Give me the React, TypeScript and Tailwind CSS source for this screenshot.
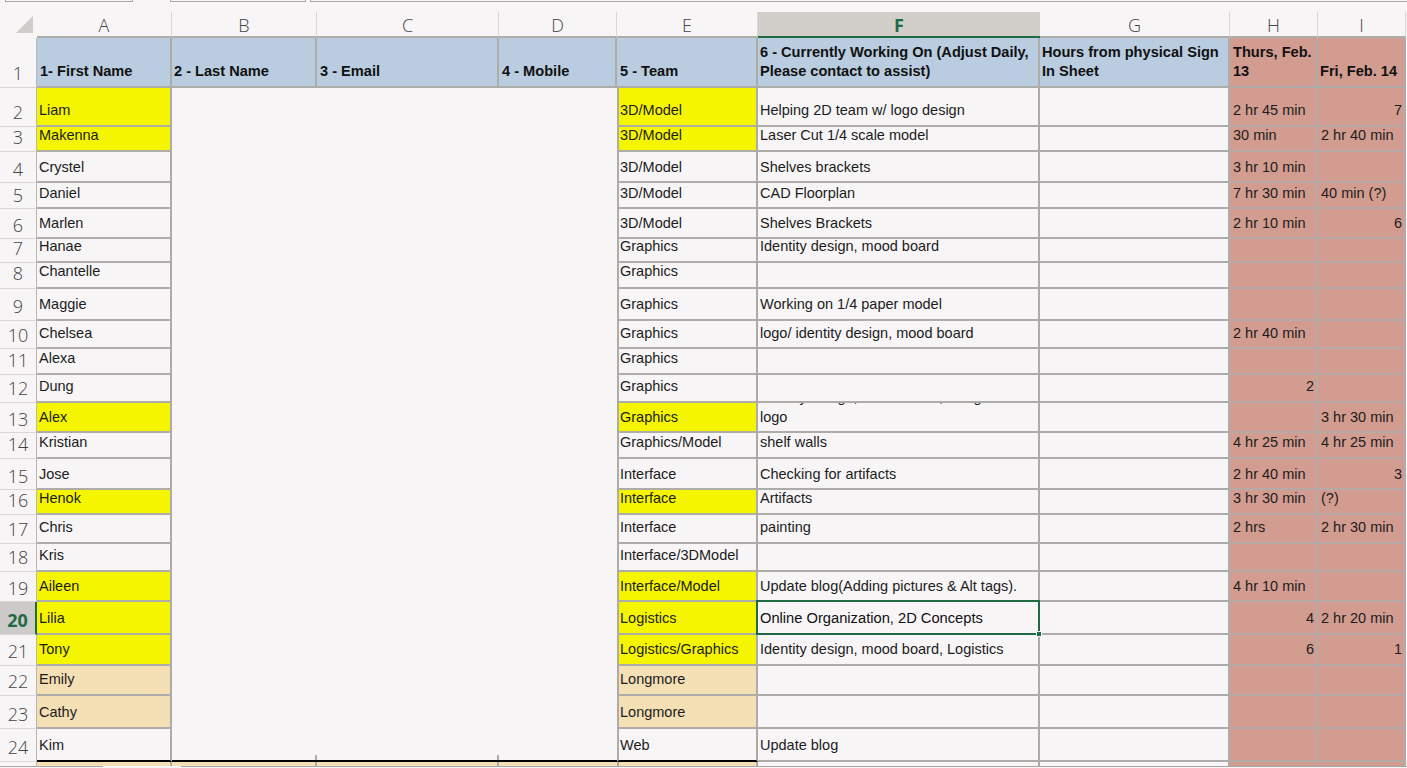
type Fill = "yellow" | "peach" | "";
type Row = {
  n: number;
  h: string;
  m: string;
  first: string;
  team: string;
  work: string;
  hh?: string | number;
  ii?: string | number;
  fill?: Fill;
  cut?: boolean;
};

const rows: Row[] = [
  { n: 2, h: "h-[39px]", m: "mt-[12px]", first: "Liam", team: "3D/Model", work: "Helping 2D team w/ logo design", hh: "2 hr 45 min", ii: 7, fill: "yellow" },
  { n: 3, h: "h-[25px]", m: "mt-[-2px]", first: "Makenna", team: "3D/Model", work: "Laser Cut 1/4 scale model", hh: "30 min", ii: "2 hr 40 min", fill: "yellow" },
  { n: 4, h: "h-[31px]", m: "mt-[5px]", first: "Crystel", team: "3D/Model", work: "Shelves brackets", hh: "3 hr 10 min" },
  { n: 5, h: "h-[26px]", m: "mt-[0px]", first: "Daniel", team: "3D/Model", work: "CAD Floorplan", hh: "7 hr 30 min", ii: "40 min (?)" },
  { n: 6, h: "h-[30px]", m: "mt-[4px]", first: "Marlen", team: "3D/Model", work: "Shelves Brackets", hh: "2 hr 10 min", ii: 6 },
  { n: 7, h: "h-[24px]", m: "mt-[-3px]", first: "Hanae", team: "Graphics", work: "Identity design, mood board" },
  { n: 8, h: "h-[26px]", m: "mt-[-2px]", first: "Chantelle", team: "Graphics", work: "" },
  { n: 9, h: "h-[32px]", m: "mt-[5px]", first: "Maggie", team: "Graphics", work: "Working on 1/4 paper model" },
  { n: 10, h: "h-[28px]", m: "mt-[2px]", first: "Chelsea", team: "Graphics", work: "logo/ identity design, mood board", hh: "2 hr 40 min" },
  { n: 11, h: "h-[26px]", m: "mt-[-1px]", first: "Alexa", team: "Graphics", work: "" },
  { n: 12, h: "h-[28px]", m: "mt-[1px]", first: "Dung", team: "Graphics", work: "", hh: 2 },
  { n: 13, h: "h-[30px]", m: "mt-[4px]", first: "Alex", team: "Graphics", work: "logo", ii: "3 hr 30 min", fill: "yellow", cut: true },
  { n: 14, h: "h-[26px]", m: "mt-[-1px]", first: "Kristian", team: "Graphics/Model", work: "shelf walls", hh: "4 hr 25 min", ii: "4 hr 25 min" },
  { n: 15, h: "h-[31px]", m: "mt-[5px]", first: "Jose", team: "Interface", work: "Checking for artifacts", hh: "2 hr 40 min", ii: 3 },
  { n: 16, h: "h-[25px]", m: "mt-[-2px]", first: "Henok", team: "Interface", work: "Artifacts", hh: "3 hr 30 min", ii: "(?)", fill: "yellow" },
  { n: 17, h: "h-[29px]", m: "mt-[2px]", first: "Chris", team: "Interface", work: "painting", hh: "2 hrs", ii: "2 hr 30 min" },
  { n: 18, h: "h-[28px]", m: "mt-[1px]", first: "Kris", team: "Interface/3DModel", work: "" },
  { n: 19, h: "h-[30px]", m: "mt-[4px]", first: "Aileen", team: "Interface/Model", work: "Update blog(Adding pictures & Alt tags).", hh: "4 hr 10 min", fill: "yellow" },
  { n: 20, h: "h-[33px]", m: "mt-[6px]", first: "Lilia", team: "Logistics", work: "Online Organization, 2D Concepts", hh: 4, ii: "2 hr 20 min", fill: "yellow" },
  { n: 21, h: "h-[31px]", m: "mt-[4px]", first: "Tony", team: "Logistics/Graphics", work: "Identity design, mood board, Logistics", hh: 6, ii: 1, fill: "yellow" },
  { n: 22, h: "h-[30px]", m: "mt-[3px]", first: "Emily", team: "Longmore", work: "", fill: "peach" },
  { n: 23, h: "h-[33px]", m: "mt-[6px]", first: "Cathy", team: "Longmore", work: "", fill: "peach" },
  { n: 24, h: "h-[33px]", m: "mt-[6px]", first: "Kim", team: "Web", work: "Update blog" },
];

const columns = [
  { l: "A", w: "w-[135px]" },
  { l: "B", w: "w-[145px]" },
  { l: "C", w: "w-[182px]" },
  { l: "D", w: "w-[118px]" },
  { l: "E", w: "w-[141px]" },
  { l: "F", w: "w-[282px]" },
  { l: "G", w: "w-[190px]" },
  { l: "H", w: "w-[88px]" },
  { l: "I", w: "w-[88px]" },
];

const fillClass = (fill?: Fill) =>
  fill === "yellow" ? "bg-[#f5f500]" : fill === "peach" ? "bg-[#f5dfb5]" : "";

const HeaderCell = ({ w, bg, text, pl }: { w: string; bg: string; text: React.ReactNode; pl: string }) => (
  <div className={`${w} ${bg} ${pl} flex shrink-0 items-end border-r-2 border-b-2 border-[#aeaca9] pb-[5px] text-[14.6px] leading-[19px] font-bold text-[#111]`}>
    <div>{text}</div>
  </div>
);

const HourCell = ({ value, m }: { value?: string | number; m: string }) => (
  <div className="h-full w-[88px] shrink-0 overflow-hidden border-r-2 border-b-2 border-[#b5aaa6] bg-[#d39c90] px-[2px]">
    <div className={`${m} leading-[20px] ${typeof value === "number" ? "text-right" : "pl-[1px]"}`}>{value}</div>
  </div>
);

const SheetRow = ({ row }: { row: Row }) => {
  const selected = row.n === 20;
  const last = row.n === 24;
  const edge = last ? "border-b-black" : "";
  return (
    <div className={`${row.h} flex text-[14.5px] text-[#1c1c1c]`}>
      <div
        className={`w-[37px] shrink-0 border-b border-[#d8d6d6] text-center font-['Open_Sans',sans-serif] text-[18px] leading-[20px] ${
          selected ? "border-r-2 border-r-[#1f6b45] bg-[#cdcbc9] font-bold text-[#1f6b45]" : "border-r border-r-[#b9b7b5] font-light text-[#444]"
        }`}
      >
        <div className={`${row.m} pt-[2px]`}>{row.n}</div>
      </div>
      <div className={`${fillClass(row.fill)} h-full w-[135px] shrink-0 overflow-hidden border-r-2 border-b-2 border-[#aeaca9] pl-[2px] ${edge}`}>
        <div className={`${row.m} leading-[20px]`}>{row.first}</div>
      </div>
      {last ? (
        <>
          <div className="flex h-full w-[145px] shrink-0 items-end justify-end border-b-2 border-black">
            <div className="h-[5px] w-[2px] bg-[#aeaca9]" />
          </div>
          <div className="flex h-full w-[182px] shrink-0 items-end justify-end border-b-2 border-black">
            <div className="h-[5px] w-[2px] bg-[#aeaca9]" />
          </div>
          <div className="h-full w-[118px] shrink-0 border-b-2 border-black" />
        </>
      ) : (
        <div className="w-[445px] shrink-0" />
      )}
      <div className={`${fillClass(row.fill)} h-full w-[141px] shrink-0 overflow-hidden border-x-2 border-b-2 border-[#aeaca9] pl-px ${edge}`}>
        <div className={`${row.m} leading-[20px] whitespace-nowrap`}>{row.team}</div>
      </div>
      <div className="relative h-full w-[282px] shrink-0 border-r-2 border-b-2 border-[#aeaca9] pl-[2px]">
        <div className={`h-full overflow-hidden ${selected ? "text-[14.7px] text-[#111]" : ""}`}>
          {row.cut && <div className="mt-[-16px] leading-[20px] whitespace-nowrap">Identity design, mood board, design</div>}
          <div className={`${row.cut ? "" : row.m} leading-[20px] whitespace-nowrap`}>{row.work}</div>
        </div>
        {selected && (
          <div className="absolute top-[-2px] right-[-2px] bottom-[-2px] left-[-2px] z-10 border-2 border-[#1f6b45]">
            <div className="absolute right-[-4px] bottom-[-4px] h-[6px] w-[6px] border border-[#f7f5f6] bg-[#1f6b45]" />
          </div>
        )}
      </div>
      <div className="h-full w-[190px] shrink-0 border-r-2 border-b-2 border-[#aeaca9]" />
      <HourCell value={row.hh} m={row.m} />
      <HourCell value={row.ii} m={row.m} />
    </div>
  );
};

export default function App() {
  return (
    <div className="h-[768px] w-[1407px] overflow-hidden bg-[#f7f5f6] font-['Liberation_Sans',sans-serif]">
      {/* ribbon edge */}
      <div className="flex h-[12px] items-start">
        <div className="ml-[5px] h-[2px] w-[128px] border-x border-b border-[#aaa8a6]" />
        <div className="ml-[37px] h-[2px] w-[136px] border-x border-b border-[#aaa8a6]" />
        <div className="ml-[4px] h-[2px] flex-1 border-b border-l border-[#aaa8a6]" />
      </div>

      {/* column letters */}
      <div className="flex h-[26px] font-['Open_Sans',sans-serif] text-[18px] leading-[26px] font-light text-[#444]">
        <div className="flex w-[37px] shrink-0 items-start pt-[4px] pl-[16px]">
          <svg width="17" height="17" viewBox="0 0 17 17">
            <polygon points="17,0 17,17 0,17" fill="#cfcdca" />
          </svg>
        </div>
        {columns.map((c) =>
          c.l === "F" ? (
            <div key={c.l} className={`${c.w} shrink-0 border-b-2 border-[#1f6b45] bg-[#d2cfcb] text-center font-bold text-[#1f6b45]`}>
              {c.l}
            </div>
          ) : (
            <div key={c.l} className={`${c.w} shrink-0 border-r border-b-2 border-r-[#d8d6d6] border-b-[#aeaca9] text-center`}>
              {c.l}
            </div>
          ),
        )}
      </div>

      {/* header row */}
      <div className="flex h-[50px]">
        <div className="w-[37px] shrink-0 border-r border-b border-r-[#b9b7b5] border-b-[#d8d6d6] pt-[25px] text-center font-['Open_Sans',sans-serif] text-[18px] leading-[20px] font-light text-[#444]">
          1
        </div>
        <HeaderCell w="w-[135px]" bg="bg-[#b9cce0]" pl="pl-[3px]" text="1- First Name" />
        <HeaderCell w="w-[145px]" bg="bg-[#b9cce0]" pl="pl-[2px]" text="2 - Last Name" />
        <HeaderCell w="w-[182px]" bg="bg-[#b9cce0]" pl="pl-[3px]" text="3 - Email" />
        <HeaderCell w="w-[118px]" bg="bg-[#b9cce0]" pl="pl-[3px]" text="4 - Mobile" />
        <HeaderCell w="w-[141px]" bg="bg-[#b9cce0]" pl="pl-[3px]" text="5 - Team" />
        <HeaderCell w="w-[282px]" bg="bg-[#b9cce0]" pl="pl-[2px]" text={<>6 - Currently Working On (Adjust Daily,<br />Please contact to assist)</>} />
        <HeaderCell w="w-[190px]" bg="bg-[#b9cce0]" pl="pl-[2px]" text={<>Hours from physical Sign<br />In Sheet</>} />
        <HeaderCell w="w-[88px]" bg="bg-[#d39c90]" pl="pl-[3px]" text={<>Thurs, Feb.<br />13</>} />
        <HeaderCell w="w-[88px]" bg="bg-[#d39c90]" pl="pl-[2px]" text="Fri, Feb. 14" />
      </div>

      {rows.map((row) => (
        <SheetRow key={row.n} row={row} />
      ))}

      {/* cut-off row 25 */}
      <div className="flex h-[4px]">
        <div className="w-[37px] shrink-0 border-r border-[#b9b7b5]" />
        <div className="w-[135px] shrink-0 border-r-2 border-[#aeaca9] bg-[#f5dfb5]" />
        <div className="w-[145px] shrink-0 border-r-2 border-[#aeaca9] bg-[#f5dfb5]" />
        <div className="w-[182px] shrink-0 border-r-2 border-[#aeaca9] bg-[#f5dfb5]" />
        <div className="w-[118px] shrink-0 bg-[#f5dfb5]" />
        <div className="w-[141px] shrink-0 border-x-2 border-[#aeaca9] bg-[#f5dfb5]" />
        <div className="w-[282px] shrink-0 border-r-2 border-[#aeaca9]" />
        <div className="w-[190px] shrink-0 border-r-2 border-[#aeaca9]" />
        <div className="w-[88px] shrink-0 border-r-2 border-[#b5aaa6] bg-[#d39c90]" />
        <div className="w-[88px] shrink-0 border-r-2 border-[#b5aaa6] bg-[#d39c90]" />
      </div>

      {/* sheet tab edge */}
      <div className="flex h-[2px]">
        <div className="w-[103px] border-t border-[#aaa8a6]" />
        <div className="w-[78px]" />
        <div className="flex-1 border-t border-[#aaa8a6]" />
      </div>
    </div>
  );
}
